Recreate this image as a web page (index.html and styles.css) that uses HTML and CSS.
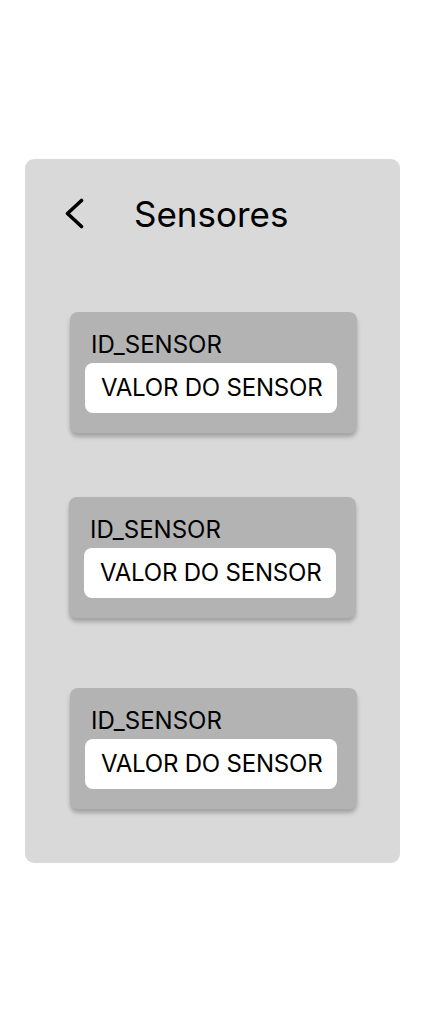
FILE: index.html
```html
<!DOCTYPE html>
<html lang="pt">
<head>
<meta charset="utf-8">
<title>Sensores</title>
<link rel="stylesheet" href="styles.css">
</head>
<body>
<main class="panel">
  <header class="header">
    <svg class="back" width="20" height="32" viewBox="0 0 20 32" aria-hidden="true">
      <path d="M17.5 2.5 L3.5 15.5 L17.5 28.5" fill="none" stroke="#000" stroke-width="3.6" stroke-linecap="round" stroke-linejoin="round"/>
    </svg>
    <h1 class="title">Sensores</h1>
  </header>
  <section class="list">
    <div class="card card-1">
      <div class="card-label">ID_SENSOR</div>
      <div class="card-value">VALOR DO SENSOR</div>
    </div>
    <div class="card card-2">
      <div class="card-label">ID_SENSOR</div>
      <div class="card-value">VALOR DO SENSOR</div>
    </div>
    <div class="card card-3">
      <div class="card-label">ID_SENSOR</div>
      <div class="card-value">VALOR DO SENSOR</div>
    </div>
  </section>
</main>
</body>
</html>
```
FILE: styles.css
```css
html, body {
  margin: 0;
  padding: 0;
  background: #ffffff;
}

body {
  font-family: Inter, "Noto Sans", "Liberation Sans", sans-serif;
  color: #000;
}

.panel {
  box-sizing: border-box;
  width: 375px;
  height: 704px;
  margin: 159px 0 0 25px;
  background: #d9d9d9;
  border-radius: 9px;
  padding: 34px 0 0 0;
}

.header {
  display: flex;
  align-items: center;
  height: 42px;
}

.back {
  display: block;
  margin-left: 39px;
  flex: none;
}

.title {
  margin: 0 0 0 50px;
  font-size: 35px;
  font-weight: 400;
  line-height: 42px;
}

.list {
  display: flex;
  flex-direction: column;
  padding-left: 45px;
}

.card {
  box-sizing: border-box;
  width: 287px;
  background: #b3b3b3;
  border-radius: 8px;
  box-shadow: 0 4px 4px rgba(0, 0, 0, 0.25);
  padding: 18px 20px 20px 15px;
}

.card-1 { margin-top: 77px; }
.card-2 { margin-top: 64px; margin-left: -1px; }
.card-3 { margin-top: 70px; }

.card-label {
  font-size: 24px;
  line-height: 29px;
  padding-left: 6px;
  margin-bottom: 4px;
}

.card-value {
  box-sizing: border-box;
  height: 50px;
  background: #ffffff;
  border-radius: 8px;
  font-size: 24px;
  line-height: 50px;
  padding-left: 16px;
  letter-spacing: -0.2px;
  white-space: nowrap;
}
```
